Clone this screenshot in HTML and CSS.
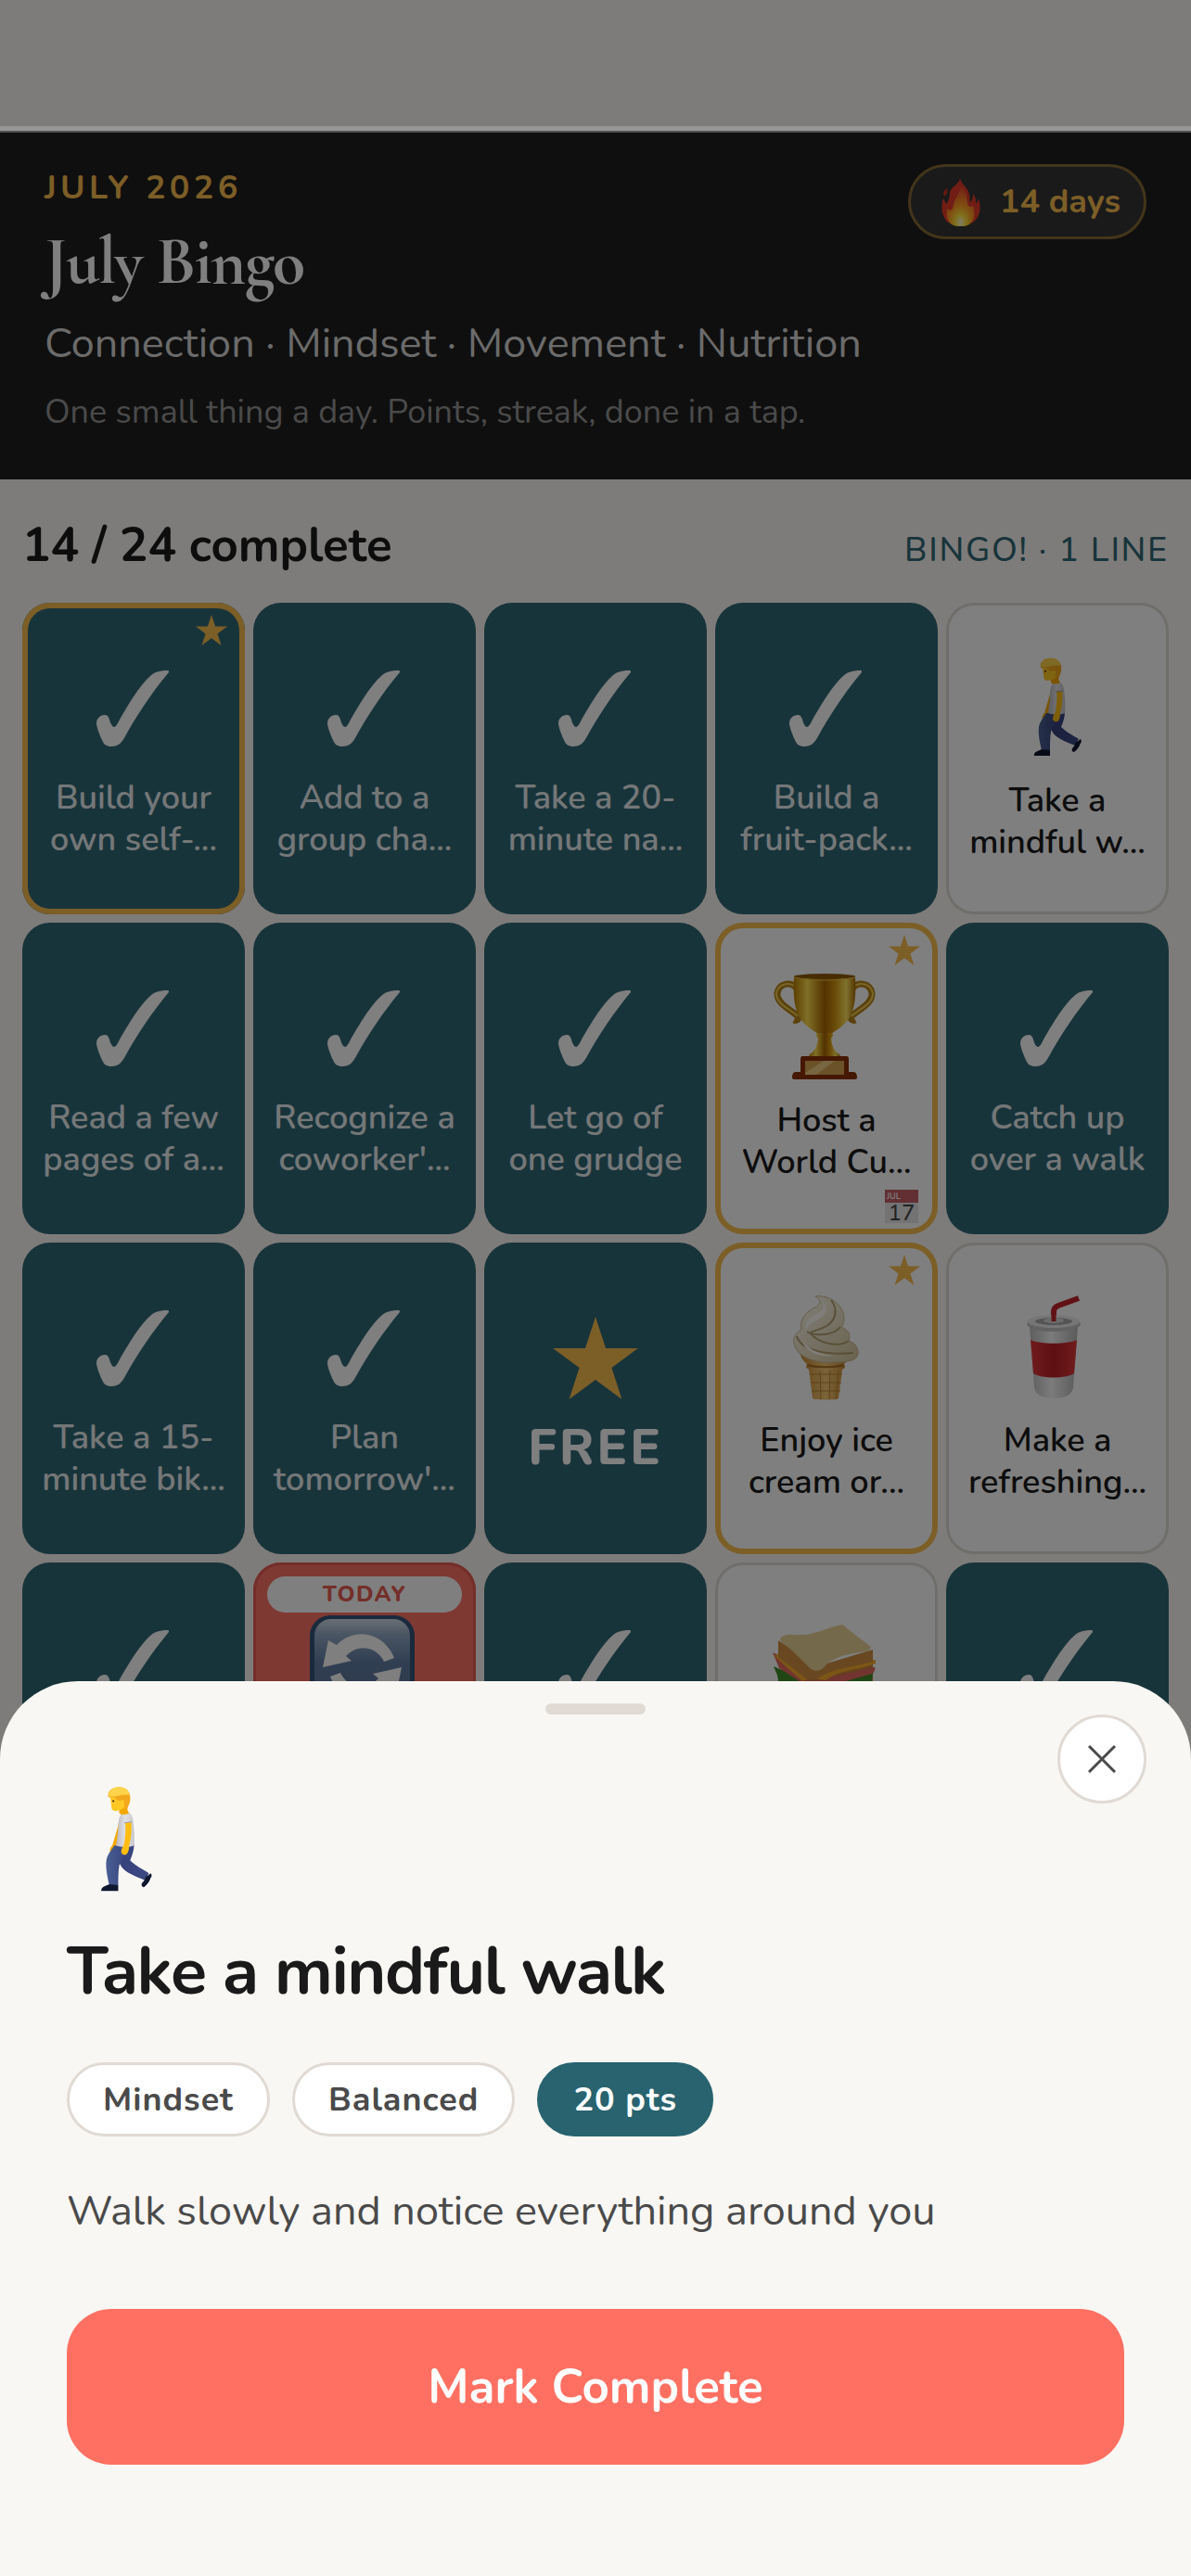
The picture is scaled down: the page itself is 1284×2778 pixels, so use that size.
FILE: index.html
```html
<!doctype html>
<html lang="en">
<head>
  <meta charset="UTF-8">
  <meta name="viewport" content="width=device-width, initial-scale=1.0">
  <title>July Bingo</title>
  <link rel="stylesheet" href="styles.css">
</head>
<body>
  <!-- shared icons -->
  <svg class="defs" aria-hidden="true">
    <defs>
      <linearGradient id="gold" x1="0" x2="1" y1="0" y2="0">
        <stop offset="0" stop-color="#b97c00"/>
        <stop offset=".22" stop-color="#ffdf4d"/>
        <stop offset=".5" stop-color="#a86500"/>
        <stop offset=".68" stop-color="#d79a12"/>
        <stop offset=".85" stop-color="#ffe35e"/>
        <stop offset="1" stop-color="#a66a00"/>
      </linearGradient>
      <linearGradient id="jeans" x1="0" x2="1" y1="0" y2="0">
        <stop offset="0" stop-color="#35407a"/>
        <stop offset="1" stop-color="#3c4a84"/>
      </linearGradient>
      <linearGradient id="jeans-front" x1="0" x2="1" y1="0" y2="0">
        <stop offset="0" stop-color="#4a5f94"/>
        <stop offset="1" stop-color="#37457c"/>
      </linearGradient>
      <linearGradient id="shirt" x1="0" x2="1" y1="0" y2="0">
        <stop offset="0" stop-color="#b9b9bf"/>
        <stop offset=".5" stop-color="#e2e2e6"/>
        <stop offset="1" stop-color="#c6c6cb"/>
      </linearGradient>
      <linearGradient id="cream" x1="0" x2="1" y1="0" y2="1">
        <stop offset="0" stop-color="#fffdf2"/>
        <stop offset="1" stop-color="#d6c69c"/>
      </linearGradient>
      <linearGradient id="cone" x1="0" x2="1" y1="0" y2="0">
        <stop offset="0" stop-color="#c98a35"/>
        <stop offset=".5" stop-color="#f6c873"/>
        <stop offset="1" stop-color="#c07e2a"/>
      </linearGradient>
      <linearGradient id="paper" x1="0" x2="1" y1="0" y2="0">
        <stop offset="0" stop-color="#bdbdbd"/>
        <stop offset=".45" stop-color="#f7f7f7"/>
        <stop offset="1" stop-color="#b5b5b5"/>
      </linearGradient>
      <linearGradient id="red" x1="0" x2="1" y1="0" y2="0">
        <stop offset="0" stop-color="#e2383b"/>
        <stop offset=".5" stop-color="#ba1f24"/>
        <stop offset="1" stop-color="#e2383b"/>
      </linearGradient>
      <linearGradient id="blue" x1="0" x2="0" y1="0" y2="1">
        <stop offset="0" stop-color="#d4dde9"/>
        <stop offset=".16" stop-color="#93abc7"/>
        <stop offset=".45" stop-color="#627da5"/>
        <stop offset="1" stop-color="#5c7294"/>
      </linearGradient>
      <radialGradient id="fire" cx=".5" cy=".9" r=".85">
        <stop offset="0" stop-color="#fffbd0"/>
        <stop offset=".22" stop-color="#ffe23a"/>
        <stop offset=".5" stop-color="#ff9a1f"/>
        <stop offset=".85" stop-color="#f0622b"/>
        <stop offset="1" stop-color="#e8442a"/>
      </radialGradient>
    </defs>

    <symbol id="check" viewBox="0 0 120 120">
      <path fill="#fff" d="M20 76c0-5 4-9 9-9 3 0 4 2 5 5 1 4 3 8 5 8s4-4 6-8C53 58 66 36 77 26c5-5 10-7 20-7 1 0 1 1 1 2C81 41 63 68 51 90c-4 7-7 11-15 11-5 0-8-2-10-7-3-6-6-15-6-18z"/>
    </symbol>
    <symbol id="star" viewBox="0 0 100 97">
      <path fill="#f8bc4e" d="M50 0l12 37h38L69 60l12 37-31-23-31 23 12-37L0 37h38z"/>
    </symbol>
    <symbol id="walker" viewBox="0 0 120 120">
      <path fill="#f5a800" d="M53 40c-2 9-5 18-7 25-2 2-3 4-2 8 3 0 5-2 5-5l6-18z"/>
      <path fill="url(#jeans)" d="M53 63h15c0 7-2 12-4 17 6 6 13 9 19 13l-4 7c-10-4-20-8-24-14-3-5-4-12-4-18z"/>
      <path fill="url(#jeans-front)" d="M48 65h12c0 8-4 13-7 20-1 6-1 13-1 20h-9c-2-8-4-18-3-25 1-6 5-10 8-15z"/>
      <path fill="#10182f" d="M76 103c2-2 3-4 4-7 2 0 3-2 5-3 1 1 1 3 0 5-1 4-4 8-7 9-2 0-3-2-2-4zM43 104l9 1v6H35c-1-4 4-5 8-7z"/>
      <path fill="#fff" d="M35 111h17v2H35zM78 107c3-2 6-6 7-10l1 2c-1 4-4 8-7 9z"/>
      <path fill="url(#shirt)" d="M56 31c7-1 10 2 11 8 1 9 2 18 1 26-5 2-13 2-18 0 1-9 2-14 2-20 0-5 1-10 4-14z"/>
      <path fill="#f5a800" d="M53 27l8-3c0 3 0 6 2 8-4 2-8 2-10 0z"/>
      <path fill="#ffbd12" d="M59 42l6-1c1 8 0 17-2 24 0 4-1 8-3 9-3 1-5-1-5-3 0-3 2-5 3-8 1-7 2-13 1-21z"/>
      <path fill="none" stroke="#9c9ca3" d="M58 42l8-1"/>
      <path fill="#ffc825" d="M44 15c0 4 1 7 1 10 0 4 2 5 5 5 8-1 12-6 11-14z"/>
      <path fill="#f2a81c" d="M42 16C40 8 49 5 55 6c7 1 10 6 9 14-1 3-2 6-3 8-2-1-3-2-3-6 1-3-2-4-4-2-3-1-5-2-6-4-2 0-4 1-6 0z"/>
      <path fill="#ffd44a" d="M42 15c0-8 8-10 13-9 5 0 8 4 8 8-8-2-14 3-21 1z"/>
      <circle cx="47" cy="20" r="1" fill="#4a2c00"/>
    </symbol>
    <symbol id="trophy" viewBox="0 0 120 120">
      <g fill="none" stroke="#b78316" stroke-width="7">
        <path d="M28 17C22 9 9 11 7 22c-1 12 17 19 22 25 2 4-2 5-4 4"/>
        <path d="M88 17c6-8 19-6 21 5 1 12-17 19-22 25-2 4 2 5 4 4"/>
      </g>
      <g fill="none" stroke="#f0cb52" stroke-width="2">
        <path d="M25 14C19 10 8 12 6 22c-1 12 18 19 23 25"/>
        <path d="M91 14c6-4 17-2 19 8 1 12-18 19-23 25"/>
      </g>
      <path fill="url(#gold)" d="M25 4h66c1 20 0 35-7 46-6 8-15 13-19 16H51c-4-3-13-8-19-16-7-11-8-26-7-46z"/>
      <ellipse cx="58" cy="4" rx="33" ry="3" fill="#8e5b00"/>
      <path fill="none" stroke="#e9bd44" stroke-width="1" d="M25 5c18 4 48 4 66 0"/>
      <path fill="url(#gold)" d="M50 65h16c2 2 1 4-1 6 1 8 2 12 9 17 2 3 1 4-1 4H43c-2 0-3-1-1-4 7-5 8-9 9-17-2-2-3-4-1-6z"/>
      <path fill="#8a3008" d="M34 90h48c1 0 2 1 2 3v14h5c3 0 4 3 4 6 0 1-1 2-2 2H25c-1 0-2-1-2-2 0-3 1-6 4-6h5V93c0-2 1-3 2-3z"/>
      <path fill="#d6a552" d="M37 95h42v15H37z"/>
      <path fill="#efcd83" d="M37 108l20-13h12l-20 15H37z"/>
    </symbol>
    <symbol id="icecream" viewBox="0 0 120 120">
      <path fill="url(#cone)" d="M31 60h56c0 8-3 13-8 17l1 4-3 2-4 31c-1 2-26 2-28 0l-4-31-3-2 1-4c-5-4-8-9-8-17z"/>
      <path fill="none" stroke="#bd842f" stroke-width="1" d="M39 80h41M42 88h35M43 97h33M44 106h31M53 84l1 31M64 84l-1 31M73 84l-3 31"/>
      <path fill="none" stroke="#a86f22" stroke-width="2" d="M39 78c12 3 28 3 40 0"/>
      <path fill="url(#cream)" stroke="#c9b98f" d="M48 4c15-2 32 9 31 26-1 4-2 6-3 7 9 4 10 9 8 15 9 3 12 11 9 17-4 6-16 6-24 6-16 2-35-4-40-12-7-9-5-18 4-23-2-10 3-17 11-22 8-4 13-9 4-14z"/>
      <g fill="none" stroke="#b39f70" stroke-width="2">
        <path d="M65 8c8 10 5 22-5 28-9 5-15 5-19 8M75 37c-8 10-27 10-36 5M84 52c-12 8-34 2-42-9M28 47c4 14 29 21 61 18"/>
      </g>
      <path fill="#fffdf4" d="M55 9c8 8 5 15-4 20-6 3-12 6-13 12-4-12 9-16 16-21 4-4 3-7 1-11zM34 52c9 11 20 15 34 16-15 2-31-4-34-16z"/>
    </symbol>
    <symbol id="cup" viewBox="0 0 120 120">
      <path fill="none" stroke="#c3242a" stroke-width="6" d="M56 39V21c0-4 2-6 5-7l22-8"/>
      <path fill="url(#paper)" d="M30 36h52l-5 66c-1 9-10 12-21 12s-20-3-21-12z"/>
      <path fill="url(#red)" d="M31 51c12 5 38 5 50 0l-3 36c-8 6-36 6-44 0z"/>
      <ellipse cx="56" cy="34" rx="29" ry="8" fill="#c4c4c4"/>
      <ellipse cx="56" cy="31" rx="28" ry="7" fill="#ededed"/>
      <ellipse cx="56" cy="31" rx="20" ry="4" fill="#a8a8a8"/>
      <ellipse cx="56" cy="30" rx="11" ry="3" fill="#d8d8d8"/>
      <path fill="none" stroke="#c3242a" stroke-width="5" d="M56 31V20"/>
    </symbol>
    <symbol id="repeat" viewBox="0 0 120 120">
      <rect x="1" y="3" width="113" height="113" rx="22" fill="#35557b"/>
      <rect x="6" y="7" width="103" height="105" rx="18" fill="url(#blue)"/>
      <g fill="#fff">
        <path d="M15 59l6-29 9 5c19-20 51-14 62 14l-11 4c-8-17-29-20-41-6l6 5z"/>
        <path d="M100 59l-6 29-9-5c-19 20-51 14-62-14l11-4c8 17 29 20 41 6l-6-5z"/>
      </g>
    </symbol>
    <symbol id="sandwich" viewBox="0 0 120 120">
      <path fill="#c9823a" d="M8 62l102-6v38l-62 22-40-24z"/>
      <path fill="#3f8c26" d="M3 58c2 6 5 8 5 18l34 18 64-16c5-5 3-14 6-19L44 76z"/>
      <path fill="#e4695c" d="M2 43l12 6 30 25 67-15c3-2 1 6-2 7L46 84 9 60z"/>
      <path fill="#f9ad2c" d="M4 47l30 27 9-3 16 2c14-11 32-10 54-18v-4L46 60 8 44z"/>
      <path fill="#d08f42" d="M8 30v18l30 23c4 2 9 2 13 0 14-10 30-11 59-18V40L50 58z"/>
      <path fill="#e8d394" d="M12 26c8-5 20 0 31-3 13-3 22-8 34-10 9 7 20 16 30 23 2 3-1 5-5 6-15 2-30 4-42 14-6 8-13 9-19 3C31 49 20 37 11 32c-1-3-1-4 1-6z"/>
    </symbol>
    <symbol id="flame" viewBox="0 0 42 52">
      <path fill="#e23a2a" d="M20 0c0 5 7 9 9 15 2 4 1 8 2 11 2-1 3-5 3-9 3 3 3 7 3 11 2-2 2-4 3-6 3 11 2 18-5 25-6 5-22 5-29 0C0 41-1 30 2 22l3 6c3-3 4-8 4-13 2-6 10-8 11-15z"/>
      <path fill="#c9321f" d="M6 11c1 4 0 6-3 9-2-3 0-7 3-9z"/>
      <path fill="url(#fire)" d="M21 8c6 6 6 11 7 19 1 4 3 5 6 3 2 8 3 14-4 20-5 3-14 3-19 0-5-4-6-9-5-17 4 3 6 2 7-4 2-9 7-12 8-21z"/>
    </symbol>
  </svg>

  <main class="app">
    <header class="hero">
      <div class="hero-text">
        <p class="month">JULY 2026</p>
        <h1>July Bingo</h1>
        <p class="pillars">Connection · Mindset · Movement · Nutrition</p>
        <p class="tagline">One small thing a day. Points, streak, done in a tap.</p>
      </div>
      <div class="streak">
        <svg class="flame"><use href="#flame"/></svg>
        <span>14 days</span>
      </div>
    </header>

    <section class="progress">
      <h2>14 / 24 complete</h2>
      <p class="bingo">BINGO! · 1 LINE</p>
    </section>

    <section class="board">
      <button class="cell done bonus">
        <svg class="bonus-star"><use href="#star"/></svg>
        <svg class="icon"><use href="#check"/></svg>
        <span class="label">Build your<br>own self-...</span>
      </button>
      <button class="cell done">
        <svg class="icon"><use href="#check"/></svg>
        <span class="label">Add to a<br>group cha...</span>
      </button>
      <button class="cell done">
        <svg class="icon"><use href="#check"/></svg>
        <span class="label">Take a 20-<br>minute na...</span>
      </button>
      <button class="cell done">
        <svg class="icon"><use href="#check"/></svg>
        <span class="label">Build a<br>fruit-pack...</span>
      </button>
      <button class="cell">
        <svg class="icon"><use href="#walker"/></svg>
        <span class="label">Take a<br>mindful w...</span>
      </button>

      <button class="cell done">
        <svg class="icon"><use href="#check"/></svg>
        <span class="label">Read a few<br>pages of a...</span>
      </button>
      <button class="cell done">
        <svg class="icon"><use href="#check"/></svg>
        <span class="label">Recognize a<br>coworker'...</span>
      </button>
      <button class="cell done">
        <svg class="icon"><use href="#check"/></svg>
        <span class="label">Let go of<br>one grudge</span>
      </button>
      <button class="cell bonus">
        <svg class="bonus-star"><use href="#star"/></svg>
        <svg class="icon"><use href="#trophy"/></svg>
        <span class="label">Host a<br>World Cu...</span>
        <span class="calendar"><span class="cal-month">JUL</span><span class="cal-day">17</span></span>
      </button>
      <button class="cell done">
        <svg class="icon"><use href="#check"/></svg>
        <span class="label">Catch up<br>over a walk</span>
      </button>

      <button class="cell done">
        <svg class="icon"><use href="#check"/></svg>
        <span class="label">Take a 15-<br>minute bik...</span>
      </button>
      <button class="cell done">
        <svg class="icon"><use href="#check"/></svg>
        <span class="label">Plan<br>tomorrow'...</span>
      </button>
      <button class="cell done">
        <span class="icon free-icon"><svg class="free-star"><use href="#star"/></svg></span>
        <span class="free">FREE</span>
      </button>
      <button class="cell bonus">
        <svg class="bonus-star"><use href="#star"/></svg>
        <svg class="icon"><use href="#icecream"/></svg>
        <span class="label">Enjoy ice<br>cream or...</span>
      </button>
      <button class="cell">
        <svg class="icon"><use href="#cup"/></svg>
        <span class="label">Make a<br>refreshing...</span>
      </button>

      <button class="cell done" aria-label="Completed">
        <svg class="icon"><use href="#check"/></svg>
      </button>
      <button class="cell today">
        <span class="today-tag">TODAY</span>
        <svg class="icon"><use href="#repeat"/></svg>
      </button>
      <button class="cell done" aria-label="Completed">
        <svg class="icon"><use href="#check"/></svg>
      </button>
      <button class="cell" aria-label="Sandwich">
        <svg class="icon"><use href="#sandwich"/></svg>
      </button>
      <button class="cell done" aria-label="Completed">
        <svg class="icon"><use href="#check"/></svg>
      </button>
    </section>
  </main>

  <div class="scrim"></div>

  <section class="sheet" role="dialog" aria-labelledby="sheet-title">
    <div class="handle"></div>
    <button class="close" aria-label="Close">
      <svg viewBox="0 0 30 30"><path d="M1 1l28 28M29 1L1 29"/></svg>
    </button>
    <svg class="sheet-icon"><use href="#walker"/></svg>
    <h2 id="sheet-title">Take a mindful walk</h2>
    <div class="chips">
      <span class="chip">Mindset</span>
      <span class="chip">Balanced</span>
      <span class="chip points">20 pts</span>
    </div>
    <p class="description">Walk slowly and notice everything around you</p>
    <button class="complete">Mark Complete</button>
  </section>
</body>
</html>
```

FILE: styles.css
```css
* {
  box-sizing: border-box;
}
body {
  margin: 0;
  height: 100vh;
  overflow: hidden;
  position: relative;
  background: #fdf9f4;
  color: #1a1a1a;
  font-family: Nunito, Lato, sans-serif;
  font-size: 36px;
  line-height: 45px;
}
h1, h2, p {
  margin: 0;
}
button {
  font: inherit;
  color: inherit;
  border: 0;
}
svg {
  display: block;
}
.defs {
  position: absolute;
  width: 0;
  height: 0;
}

/* header */
.app {
  padding-top: 141px;
}
.hero {
  display: flex;
  justify-content: space-between;
  align-items: flex-start;
  padding: 36px 48px 50px;
  background: #1f1f1f;
}
.hero-text {
  padding-top: 3px;
}
.month {
  color: #f8bc4e;
  font-weight: 700;
  letter-spacing: 0.12em;
}
.hero h1 {
  margin-top: 15px;
  color: #fff;
  font-family: "Cormorant Garamond", "Liberation Serif", serif;
  font-size: 72px;
  font-weight: 700;
  line-height: 84px;
  letter-spacing: -0.02em;
}
.pillars {
  margin-top: 17px;
  color: #d6d6d6;
  font-size: 45px;
  line-height: 60px;
}
.tagline {
  margin-top: 21px;
  color: #949494;
}
.streak {
  display: flex;
  align-items: center;
  gap: 21px;
  height: 81px;
  padding: 0 25px 0 33px;
  border: 3px solid #856a34;
  border-radius: 42px;
  background: #353535;
  color: #f8bc4e;
  font-weight: 700;
}
.flame {
  width: 42px;
  height: 52px;
}

.progress {
  display: flex;
  justify-content: space-between;
  align-items: baseline;
  padding: 41px 24px 32px;
}
.progress h2 {
  font-size: 51px;
  line-height: 60px;
}
.bingo {
  color: #316876;
  font-weight: 500;
  letter-spacing: 0.05em;
}

/* bingo board */
.board {
  display: grid;
  grid-template-columns: repeat(5, 1fr);
  gap: 9px;
  padding: 0 24px;
}
.cell {
  position: relative;
  display: flex;
  flex-direction: column;
  align-items: center;
  justify-content: flex-start;
  gap: 17px;
  aspect-ratio: 5 / 7;
  padding: 54px 0 0;
  border-radius: 30px;
  background: #fff;
  box-shadow: inset 0 0 0 3px #dfdcd5;
  font-weight: 600;
}
.cell.done {
  gap: 14px;
  background: #316876;
  box-shadow: none;
  color: #fff;
}
.cell.bonus {
  box-shadow: inset 0 0 0 6px #f8bc4e;
}
.cell.today {
  background: #ff7266;
  box-shadow: inset 0 0 0 3px #e85d54;
}
.icon {
  width: 120px;
  height: 120px;
  flex: none;
}
.label {
  white-space: nowrap;
}
.done .label {
  color: #e8eef0;
}
.bonus-star {
  position: absolute;
  top: 13px;
  right: 19px;
  width: 34px;
  height: 33px;
}
.free-icon {
  display: flex;
  justify-content: center;
  align-items: flex-end;
  padding-bottom: 5px;
}
.free-star {
  width: 92px;
  height: 89px;
}
.free {
  font-size: 54px;
  font-weight: 800;
  line-height: 66px;
  letter-spacing: 3px;
}
.calendar {
  position: absolute;
  right: 21px;
  bottom: 12px;
  display: flex;
  flex-direction: column;
  width: 36px;
  height: 36px;
  background: #e2e2e4;
  opacity: 0.8;
}
.cal-month {
  height: 14px;
  padding-left: 2px;
  background: #b8383f;
  color: #fff;
  font-size: 9px;
  line-height: 14px;
  text-align: left;
}
.cal-day {
  font-size: 24px;
  font-weight: 500;
  line-height: 22px;
}
.today-tag {
  position: absolute;
  top: 15px;
  left: 15px;
  right: 15px;
  border-radius: 20px;
  background: #fff;
  color: #e85d54;
  font-size: 24px;
  font-weight: 800;
  line-height: 39px;
  letter-spacing: 0.06em;
}

.scrim {
  position: absolute;
  inset: 0;
  background: rgba(0, 0, 0, 0.5);
}
/* seam under the status bar */
.scrim::before {
  content: "";
  position: absolute;
  top: 136px;
  left: 0;
  right: 0;
  height: 5px;
  border-bottom: 2px solid rgba(255, 255, 255, 0.1);
  background: rgba(255, 255, 255, 0.2);
}

/* bottom sheet */
.sheet {
  position: absolute;
  left: 0;
  right: 0;
  bottom: 0;
  padding: 24px 72px 120px;
  border-radius: 84px 84px 0 0;
  background: #f9f7f3;
}
.handle {
  width: 108px;
  height: 12px;
  margin: 0 auto;
  border-radius: 6px;
  background: #e0dad4;
}
.close {
  position: absolute;
  top: 36px;
  right: 48px;
  display: flex;
  align-items: center;
  justify-content: center;
  width: 96px;
  height: 96px;
  padding: 0;
  border: 3px solid #e0dad4;
  border-radius: 50%;
  background: #fff;
}
.close svg {
  width: 30px;
  height: 30px;
  fill: none;
  stroke: #4a4a4a;
  stroke-width: 3;
}
.sheet-icon {
  width: 128px;
  height: 128px;
  margin-top: 72px;
}
.sheet h2 {
  margin-top: 32px;
  font-size: 72px;
  line-height: 90px;
  letter-spacing: -0.02em;
}
.chips {
  display: flex;
  gap: 24px;
  margin-top: 53px;
}
.chip {
  padding: 15px 36px 14px;
  border: 3px solid #e0dad4;
  border-radius: 42px;
  background: #fff;
  color: #4a4a4a;
  font-weight: 700;
  letter-spacing: 1px;
}
.chip.points {
  border-color: #28636f;
  background: #28636f;
  color: #fff;
}
.description {
  margin-top: 48px;
  color: #4a4a4a;
  font-size: 45px;
  line-height: 66px;
}
.complete {
  display: block;
  width: 100%;
  margin-top: 72px;
  padding: 51px;
  border-radius: 48px;
  background: #ff7062;
  color: #fff;
  font-size: 51px;
  font-weight: 700;
  line-height: 66px;
}
```
